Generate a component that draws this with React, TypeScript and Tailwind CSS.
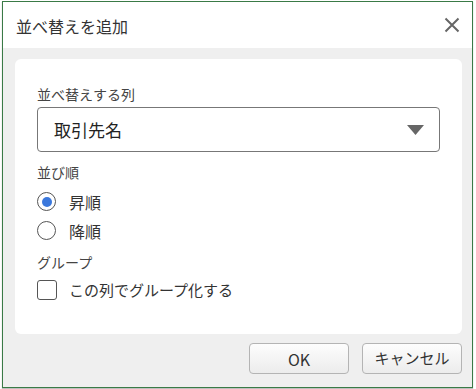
import React from "react";

const font = { fontFamily: '"Noto Sans CJK JP", "Noto Sans", sans-serif' };

export default function App() {
  return (
    <div className="w-[476px] h-[389px] bg-white pl-[2px] pt-[1px]" style={font}>
      <div className="w-[471px] h-[387px] border border-[#3a7a46] flex flex-col shadow-[0_1px_1px_rgba(0,0,0,0.25)]">
        {/* Title bar */}
        <div className="h-[46px] bg-white flex items-center justify-between pl-[13px] pr-[12px]">
          <span className="text-[16px] leading-[20px] text-[#333] mt-[1px]">並べ替えを追加</span>
          <svg width="16" height="16" viewBox="0 0 16 16" className="mb-[1px]">
            <path d="M1.5 1.5 L14.5 14.5 M14.5 1.5 L1.5 14.5" stroke="#666" strokeWidth="2" fill="none" />
          </svg>
        </div>
        {/* Body */}
        <div className="flex-1 bg-[#efefef] pl-[12px] pr-[10px] pt-[11px] flex flex-col">
          <div className="h-[275px] bg-white rounded-[6px] px-[22px] pt-[25px] flex flex-col">
            <div className="text-[14px] leading-[20px] text-[#444]">並べ替えする列</div>
            <div className="mt-[3px] h-[45px] border border-[#777] rounded-[4px] flex items-center justify-between pl-[16px] pr-[15px]">
              <span className="text-[17px] leading-[22px] text-[#222]">取引先名</span>
              <svg width="17" height="10" viewBox="0 0 17 10">
                <path d="M0 0 H17 L8.5 10 Z" fill="#666" />
              </svg>
            </div>
            <div className="mt-[10px] text-[14px] leading-[20px] text-[#444]">並び順</div>
            <div className="mt-[5px] h-[29px] flex items-center">
              <div className="w-[19px] h-[19px] rounded-full border border-[#555] flex items-center justify-center">
                <div className="w-[10px] h-[10px] rounded-full bg-[#3b78dc]" />
              </div>
              <span className="ml-[13px] text-[16px] leading-[20px] text-[#333]">昇順</span>
            </div>
            <div className="h-[29px] flex items-center">
              <div className="w-[19px] h-[19px] rounded-full border border-[#555]" />
              <span className="ml-[13px] text-[16px] leading-[20px] text-[#333]">降順</span>
            </div>
            <div className="mt-[7px] text-[14px] leading-[20px] text-[#444]">グループ</div>
            <div className="mt-[6px] h-[24px] flex items-center">
              <div className="w-[20px] h-[20px] rounded-[3px] border border-[#555]" />
              <span className="ml-[12px] text-[15px] leading-[20px] text-[#333]">この列でグループ化する</span>
            </div>
          </div>
          <div className="flex justify-end gap-[13px] pt-[9px]">
            <button className="w-[100px] h-[31px] rounded-[4px] border border-[#b4b4b4] bg-gradient-to-b from-[#fdfdfd] to-[#ececec] text-[16px] text-[#333] flex items-center justify-center">
              OK
            </button>
            <button className="w-[100px] h-[31px] rounded-[4px] border border-[#b4b4b4] bg-gradient-to-b from-[#fdfdfd] to-[#ececec] text-[15px] text-[#333] flex items-center justify-center">
              キャンセル
            </button>
          </div>
        </div>
      </div>
    </div>
  );
}
